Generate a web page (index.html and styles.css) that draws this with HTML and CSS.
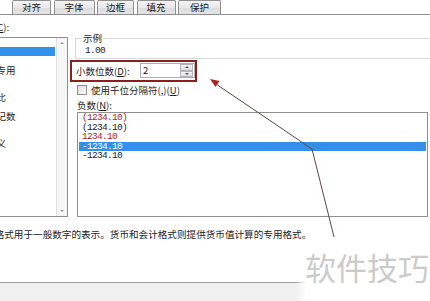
FILE: index.html
```html
<!DOCTYPE html>
<html lang="zh-CN">

<head>
    <meta charset="UTF-8">
    <meta name="viewport" content="width=device-width, initial-scale=1.0">
    <title>设置单元格格式 - 数值</title>
    <link rel="stylesheet" href="styles.css">
</head>

<body>

    <!-- Tab strip -->
    <div class="tabs">
        <div class="tab t1">对齐</div>
        <div class="tab t2">字体</div>
        <div class="tab t3">边框</div>
        <div class="tab t4">填充</div>
        <div class="tab t5">保护</div>
    </div>

    <div class="page">
        <!-- Category list -->
        <div class="category">
            <div class="label">分类(<u>C</u>):</div>
            <div class="cat-list">
                <div class="cat-items">
                    <div class="cat-item">常规</div>
                    <div class="cat-item selected">数值</div>
                    <div class="cat-item">货币</div>
                    <div class="cat-item">会计专用</div>
                    <div class="cat-item">日期</div>
                    <div class="cat-item">时间</div>
                    <div class="cat-item">百分比</div>
                    <div class="cat-item">分数</div>
                    <div class="cat-item">科学记数</div>
                    <div class="cat-item">文本</div>
                    <div class="cat-item">特殊</div>
                    <div class="cat-item">自定义</div>
                </div>
                <div class="scrollbar">
                    <span class="sb-up"></span>
                    <span class="sb-down"></span>
                </div>
            </div>
        </div>

        <!-- Number options -->
        <div class="options">
            <fieldset class="sample">
                <legend>示例</legend>
                <div class="sample-value">1.00</div>
            </fieldset>

            <div class="decimal-row">
                <span class="decimal-label">小数位数(<u>D</u>):</span>
                <div class="spin">
                    <span class="spin-value">2</span>
                    <div class="spin-btns">
                        <span class="spin-up"></span>
                        <span class="spin-down"></span>
                    </div>
                </div>
            </div>

            <div class="check-row">
                <span class="checkbox"></span>
                <span>使用千位分隔符(,)(<u>U</u>)</span>
            </div>

            <div class="label neg-label">负数(<u>N</u>):</div>
            <div class="neg-list">
                <div class="neg-item red">(1234.10)</div>
                <div class="neg-item">(1234.10)</div>
                <div class="neg-item red">1234.10</div>
                <div class="neg-item selected">-1234.10</div>
                <div class="neg-item">-1234.10</div>
            </div>
        </div>
    </div>

    <p class="desc">常规格式用于一般数字的表示。货币和会计格式则提供货币值计算的专用格式。</p>

    <div class="footer"></div>

    <!-- Annotation: red frame + pointer arrow -->
    <div class="highlight"></div>
    <svg class="pointer" width="430" height="301" viewBox="0 0 430 301">
        <path d="M334 237 L312 149 L216 84" fill="none" stroke="#5c4646" stroke-width="1" />
        <polygon points="210,79 219.5,81.1 215.5,86.9" fill="#a82525" />
    </svg>

    <div class="watermark">软件技巧</div>

</body>

</html>
```

FILE: styles.css
```css
* {
    box-sizing: border-box;
}

body {
    margin: 0;
    width: 430px;
    height: 301px;
    overflow: hidden;
    position: relative;
    background: #fff;
    font-family: "Noto Sans CJK SC", sans-serif;
    font-size: 9.5px;
    color: #1c1c1c;
}

u {
    text-decoration-thickness: 1px;
}

/* Tabs */
.tabs {
    display: flex;
    gap: 2.5px;
    height: 15px;
    padding-left: 12px;
    border-bottom: 1px solid #8e8e8e;
}

.tab {
    height: 14px;
    display: flex;
    align-items: center;
    justify-content: center;
    border: 1px solid #8e8f8f;
    border-bottom: none;
    border-radius: 2px 2px 0 0;
    background: linear-gradient(#f4f4f4, #e9e9e9 50%, #dcdcdc 51%, #e4e4e4);
    line-height: 1;
    color: #222;
}

.t1 { width: 39px; }
.t2 { width: 41px; }
.t3 { width: 37px; }
.t4 { width: 39px; }
.t5 { width: 43px; }

/* Main area */
.page {
    display: flex;
    margin-left: -25px;
}

.label {
    line-height: 12px;
    white-space: nowrap;
}

.category {
    width: 93px;
    padding-top: 6px;
}

.cat-list {
    display: flex;
    height: 180px;
    margin-top: 4px;
    border: 1px solid #8e8f8f;
    background: #fff;
}

.cat-items {
    flex: 1;
    overflow: hidden;
    padding-left: 1.5px;
}

.cat-item {
    height: 9.2px;
    line-height: 9.2px;
    white-space: nowrap;
}

.cat-item.selected {
    margin-right: 1px;
    background: #3390ea;
    color: #fff;
}

.scrollbar {
    width: 11px;
    display: flex;
    flex-direction: column;
    justify-content: space-between;
    align-items: center;
    padding: 4px 0;
    border-left: 1px solid #dedede;
    background: #f6f6f6;
}

.sb-up,
.sb-down {
    width: 0;
    height: 0;
    border-left: 2px solid transparent;
    border-right: 2px solid transparent;
}

.sb-up {
    border-bottom: 2px solid #9a9a9a;
}

.sb-down {
    border-top: 2px solid #9a9a9a;
}

.options {
    flex: 1;
    margin-left: 7px;
}

/* Sample group */
.sample {
    margin: 17px 0 0;
    padding: 2px 0 2px 9px;
    border: 1px solid #d5d9dc;
    border-right: none;
}

.sample legend {
    padding: 0 1px;
    margin-left: -3px;
    line-height: 12px;
}

.sample-value,
.neg-item {
    font-family: "Liberation Mono", monospace;
    letter-spacing: -0.7px;
}

.sample-value {
    line-height: 10px;
}

/* Decimal places */
.decimal-row {
    display: flex;
    align-items: center;
    height: 15px;
    margin-top: 4px;
}

.decimal-label {
    width: 65px;
    padding-left: 1px;
    white-space: nowrap;
}

.spin {
    display: flex;
    width: 55px;
    height: 15px;
    border: 1px solid #abadb3;
    background: #fff;
}

.spin-value {
    flex: 1;
    padding-left: 2px;
    line-height: 13px;
}

.spin-btns {
    display: flex;
    flex-direction: column;
    width: 13px;
    margin: 0 1px 0 0;
}

.spin-up,
.spin-down {
    flex: 1;
    display: flex;
    align-items: center;
    justify-content: center;
    border: 1px solid #b4b4b4;
    background: linear-gradient(#f6f6f6, #dedede);
}

.spin-up::after,
.spin-down::after {
    content: "";
    border-left: 2px solid transparent;
    border-right: 2px solid transparent;
}

.spin-up::after {
    border-bottom: 2px solid #555;
}

.spin-down::after {
    border-top: 2px solid #555;
}

/* Thousands separator */
.check-row {
    display: flex;
    align-items: center;
    gap: 4px;
    height: 12px;
    margin-top: 6px;
    padding-left: 2px;
    white-space: nowrap;
}

.checkbox {
    width: 10px;
    height: 10px;
    border: 1px solid #8f8f8f;
    background: linear-gradient(135deg, #dcdcdc, #fafafa);
}

/* Negative numbers */
.neg-label {
    margin-top: 3px;
    padding-left: 2px;
}

.neg-list {
    width: 351px;
    height: 105px;
    margin: 1px 0 0 2px;
    padding: 0 1px;
    border: 1px solid #8e8f8f;
    background: #fff;
}

.neg-item {
    height: 9.6px;
    line-height: 9.6px;
    padding-left: 3px;
    color: #1c1c1c;
}

.neg-item.red {
    color: #b02222;
}

.neg-item.selected {
    background: #3390ea;
    color: #fff;
}

/* Description */
.desc {
    margin: 11px 0 0 -24.5px;
    font-size: 9.6px;
    line-height: 12px;
    white-space: nowrap;
}

.footer {
    height: 19px;
    margin-top: 42px;
    border-top: 1px solid #a0a0a0;
    background: #f0f0f0;
}

/* Annotation overlays */
.highlight {
    position: absolute;
    left: 70px;
    top: 60px;
    width: 127px;
    height: 22px;
    border: 2px solid #8b1e1e;
}

.pointer {
    position: absolute;
    left: 0;
    top: 0;
    pointer-events: none;
}

.watermark {
    position: absolute;
    right: 0;
    bottom: 0;
    width: 134px;
    height: 52px;
    padding: 2px 0 0 9px;
    background: linear-gradient(to right, rgba(255, 255, 255, 0), #fff 10px);
    font-size: 31px;
    line-height: 31px;
    color: #cbcbcb;
    white-space: nowrap;
}
```
